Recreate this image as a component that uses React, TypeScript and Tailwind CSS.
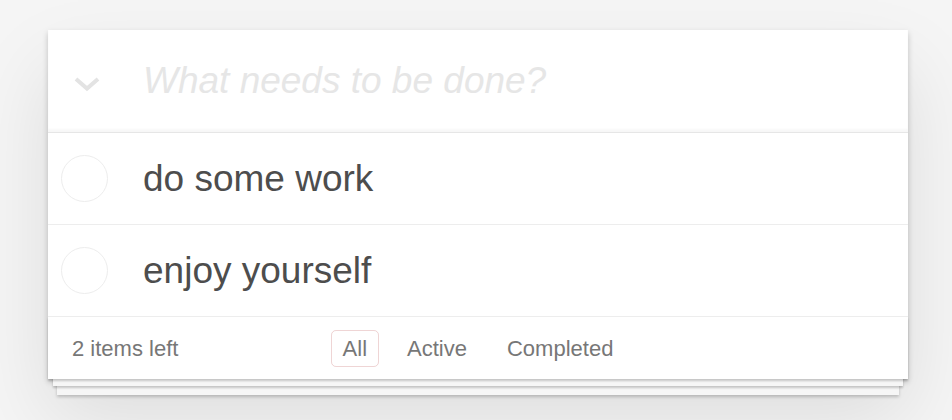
import React from 'react';

const todos = ['do some work', 'enjoy yourself'];
const filters = ['All', 'Active', 'Completed'];

export default function App() {
  return (
    <div className="min-h-screen bg-[#f5f5f5] pt-[30px] pl-[48px] font-['Liberation_Sans',Arial,sans-serif]">
      <section className="relative w-[860px] bg-white shadow-[0_3px_6px_rgba(0,0,0,0.2),0_39px_78px_rgba(0,0,0,0.1)]">
        {/* Header */}
        <header className="flex items-center h-[102px] shadow-[inset_0_-3px_2px_rgba(0,0,0,0.03)]">
          <svg width="28" height="16" viewBox="0 0 28 16" className="ml-[25px] mt-[6px] shrink-0">
            <polyline points="3,3 14,12.5 25,3" fill="none" stroke="#e3e3e3" strokeWidth="4" />
          </svg>
          <input
            className="ml-[42px] flex-1 bg-transparent outline-none text-[37px] text-[#4d4d4d] font-['Liberation_Sans',Arial,sans-serif] placeholder:italic placeholder:text-[#e6e6e6]"
            placeholder="What needs to be done?"
          />
        </header>

        {/* List */}
        <ul className="border-t border-[#e6e6e6]">
          {todos.map((t) => (
            <li key={t} className="flex items-center h-[92px] border-b border-[#ededed]">
              <div className="ml-[13px] w-[47px] h-[47px] rounded-full border border-[#ededed] shrink-0" />
              <span className="ml-[35px] text-[37px] leading-none text-[#4d4d4d]">{t}</span>
            </li>
          ))}
        </ul>

        {/* Footer */}
        <footer className="relative h-[62px] px-[24px] grid grid-cols-[1fr_auto_1fr] items-center text-[22px] text-[#777] shadow-[0_2px_2px_rgba(0,0,0,0.2),0_12px_0_-5px_#f6f6f6,0_14px_2px_-5px_rgba(0,0,0,0.2),0_25px_0_-9px_#f6f6f6,0_27px_3px_-9px_rgba(0,0,0,0.2)]">
          <span>2 items left</span>
          <ul className="flex">
            {filters.map((f, i) => (
              <li key={f}>
                <a
                  className={
                    'block mx-[8px] px-[11px] py-[5px] leading-[25px] rounded-[5px] border ' +
                    (i === 0 ? 'border-[rgba(175,47,47,0.2)]' : 'border-transparent')
                  }
                >
                  {f}
                </a>
              </li>
            ))}
          </ul>
          <span />
        </footer>
      </section>
    </div>
  );
}
